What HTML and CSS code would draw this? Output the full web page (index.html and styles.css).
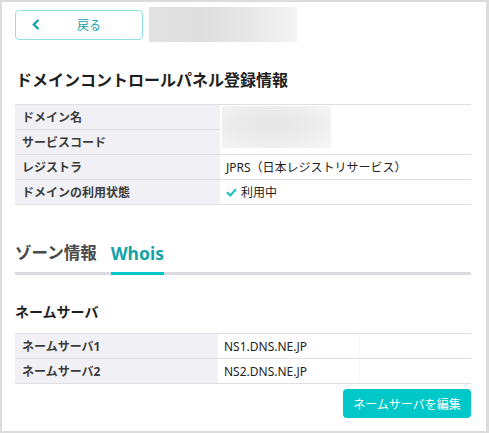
FILE: index.html
```html
<!DOCTYPE html>
<html lang="ja">
<head>
<meta charset="utf-8">
<title>ドメインコントロールパネル登録情報</title>
<link rel="stylesheet" href="styles.css">
</head>
<body>
<div class="page">
  <div class="topbar">
    <button class="back-btn" type="button">
      <svg class="back-icon" width="8" height="11" viewBox="0 0 8 11"><polyline points="6.5,1 1.8,5.5 6.5,10" fill="none" stroke="#129ea8" stroke-width="2.2"/></svg>
      <span class="back-label">戻る</span>
    </button>
    <div class="blur-name"></div>
  </div>

  <h1 class="title">ドメインコントロールパネル登録情報</h1>

  <table class="info-table">
    <tr><th>ドメイン名</th><td class="blur-cell" rowspan="2"><div class="blur-box"></div></td></tr>
    <tr><th>サービスコード</th></tr>
    <tr><th>レジストラ</th><td>JPRS（日本レジストリサービス）</td></tr>
    <tr><th>ドメインの利用状態</th><td><span class="status"><svg class="check" width="11" height="9" viewBox="0 0 11 9"><polyline points="1,4.2 4.2,7.4 10,1.2" fill="none" stroke="#22bfc7" stroke-width="2.2"/></svg>利用中</span></td></tr>
  </table>

  <div class="tabs">
    <div class="tab">ゾーン情報</div>
    <div class="tab active">Whois</div>
  </div>

  <h2 class="subtitle">ネームサーバ</h2>

  <table class="ns-table">
    <tr><th>ネームサーバ1</th><td>NS1.DNS.NE.JP</td><td class="empty"></td></tr>
    <tr><th>ネームサーバ2</th><td>NS2.DNS.NE.JP</td><td class="empty"></td></tr>
  </table>

  <div class="actions">
    <button class="edit-btn" type="button">ネームサーバを編集</button>
  </div>
</div>
</body>
</html>
```

FILE: styles.css
```css
* { box-sizing: border-box; }
html, body { margin: 0; padding: 0; background: #fff; }
body {
  font-family: "Noto Sans", "Noto Sans CJK JP", sans-serif;
  color: #222;
}
.page {
  width: 489px;
  height: 433px;
  border: 2px solid #dcdcdc;
  border-right-width: 3px;
  padding: 5px 15px 0 13px;
  overflow: hidden;
}
.topbar {
  display: flex;
  align-items: center;
  gap: 6px;
  height: 35px;
}
.back-btn {
  display: flex;
  align-items: center;
  width: 128px;
  height: 30px;
  padding: 0 0 0 16px;
  background: #fff;
  border: 1px solid #90e2e2;
  border-radius: 4px;
  font: inherit;
  cursor: pointer;
}
.back-icon { display: block; }
.back-label {
  margin-left: 37px;
  font-size: 12px;
  color: #149fa8;
}
.blur-name {
  width: 148px;
  height: 35px;
  background: linear-gradient(90deg, #e2e2e2 0%, #dedede 35%, #e8e8e8 70%, #f4f4f4 100%);
}
.title {
  margin: 28px 0 14px 1px;
  font-size: 16px;
  line-height: 20px;
  font-weight: 700;
  color: #1e1e1e;
}
table {
  width: 456px;
  border-collapse: collapse;
  font-size: 12px;
}
th, td {
  height: 25px;
  padding: 0;
  border-top: 1px solid #dfdfe3;
  border-bottom: 1px solid #dfdfe3;
  text-align: left;
  vertical-align: middle;
}
th {
  background: #f1f1f5;
  font-weight: 700;
  color: #3c3c3c;
  padding-left: 7px;
}
td { padding-left: 6px; color: #222; }
.info-table th { width: 205px; }
.blur-cell { padding: 1px 0 0 2px; vertical-align: top; }
.blur-box {
  width: 109px;
  height: 42px;
  background: radial-gradient(ellipse at 45% 45%, #e6e6e6 0%, #ebebeb 45%, #f4f4f4 85%, #f7f7f7 100%);
}
.status { display: inline-flex; align-items: center; gap: 4px; }
.check { display: block; }
.tabs {
  display: flex;
  align-items: flex-end;
  gap: 14px;
  margin-top: 35px;
  border-bottom: 3px solid #dcdce0;
}
.tab {
  font-size: 16.5px;
  line-height: 26px;
  font-weight: 700;
  color: #4a4a4a;
  padding-bottom: 6px;
  margin-bottom: -3px;
  border-bottom: 3px solid transparent;
}
.tab.active {
  font-size: 17.5px;
  color: #13a3a6;
  border-bottom-color: #00c8c8;
}
.subtitle {
  margin: 28px 0 12px 0;
  font-size: 14px;
  line-height: 18px;
  font-weight: 700;
  color: #1e1e1e;
}
.ns-table th { width: 203px; }
.ns-table td:nth-child(2) { width: 141px; }
.ns-table td.empty { border-left: 1px solid #f7f7f7; }
.actions {
  display: flex;
  justify-content: flex-end;
  margin-top: 5px;
}
.edit-btn {
  width: 128px;
  height: 29px;
  border: 0;
  border-radius: 4px;
  background: #00c8c8;
  color: #fff;
  font: inherit;
  font-size: 12px;
  cursor: pointer;
}
```
